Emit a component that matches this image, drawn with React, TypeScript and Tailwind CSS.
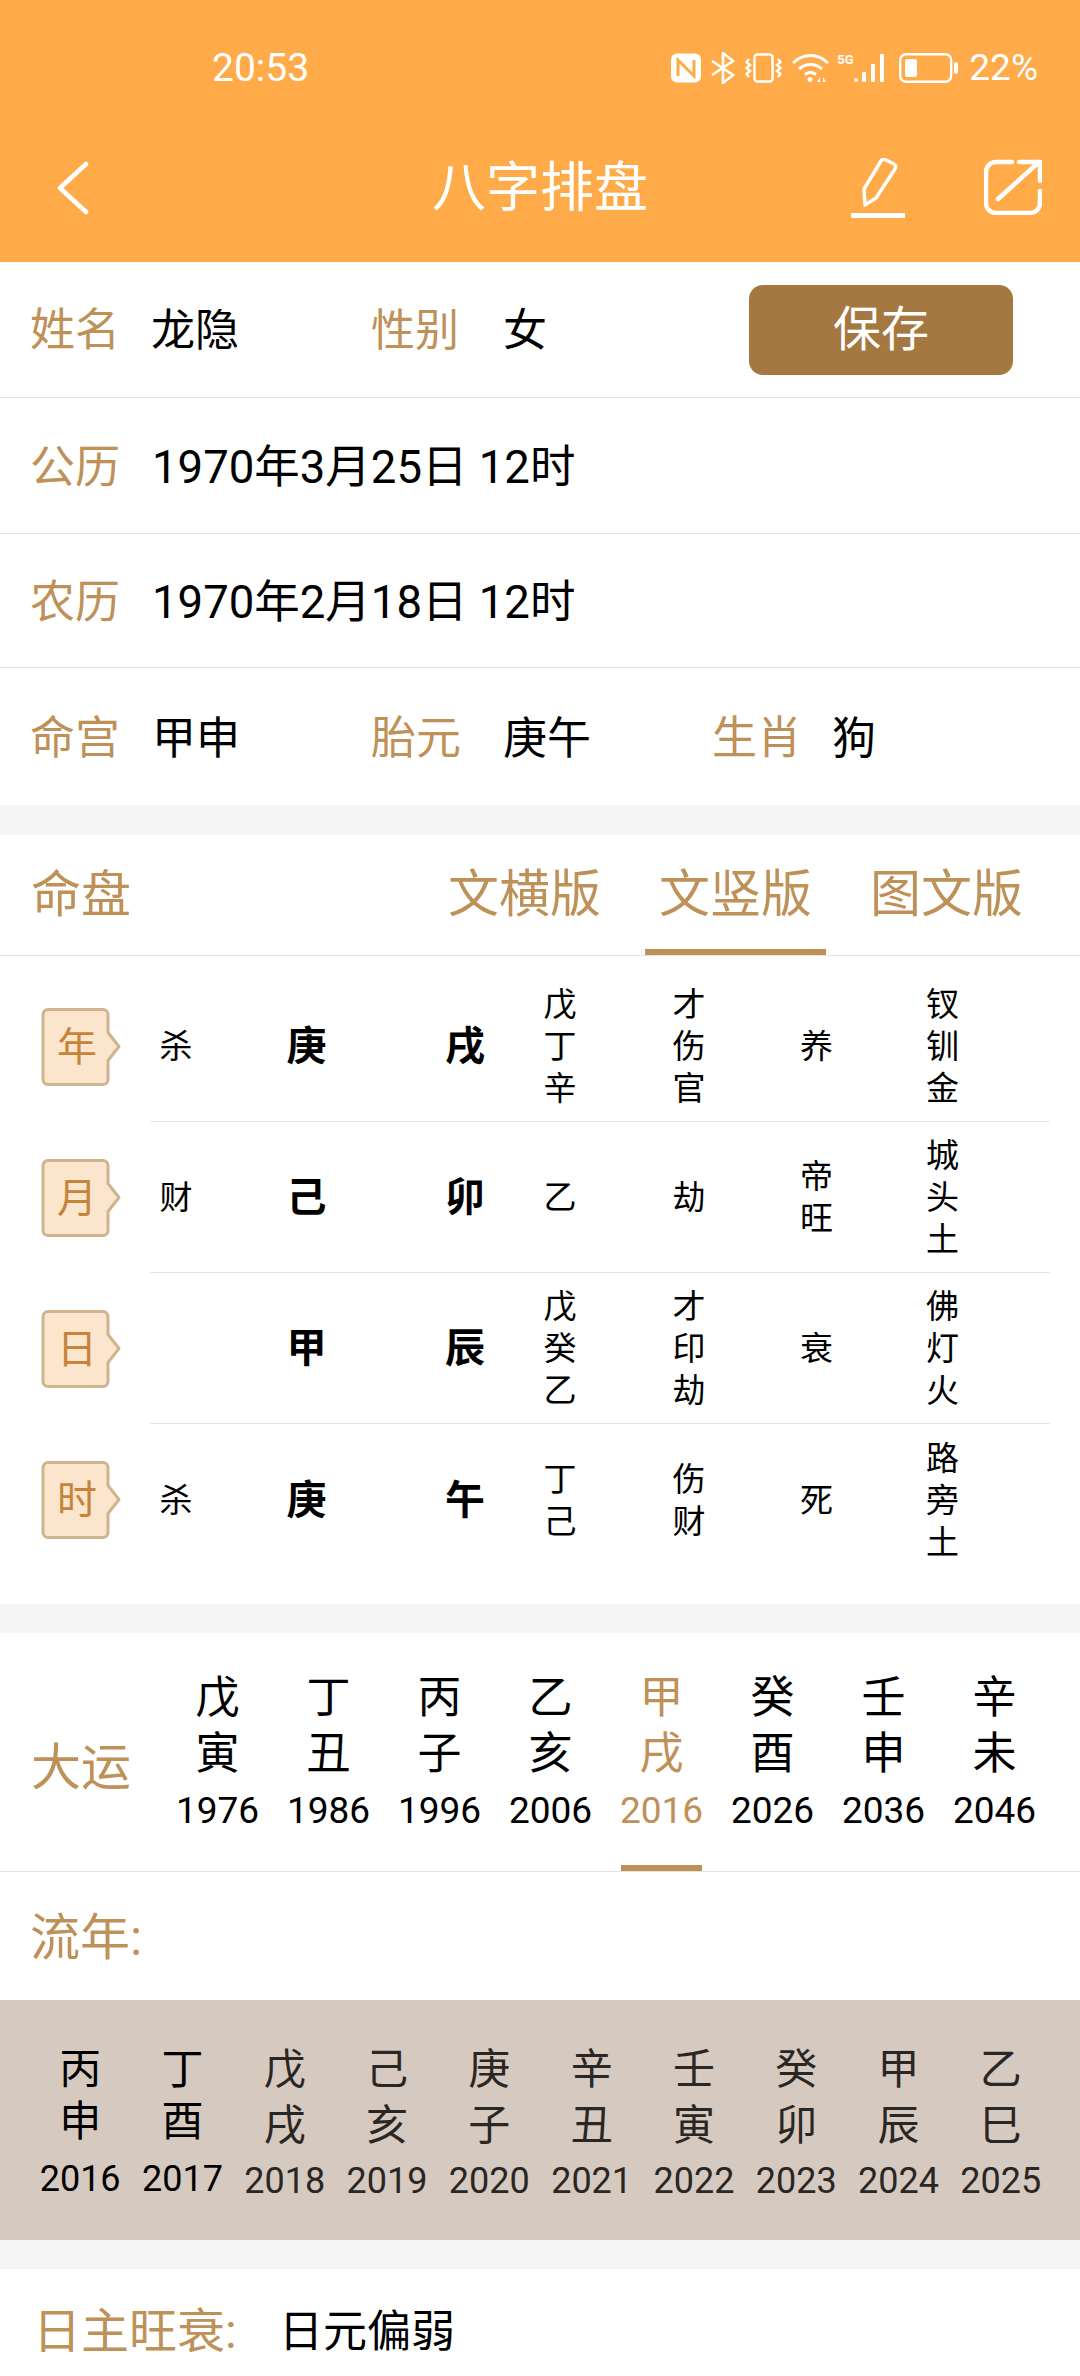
import React from 'react';

const FONT = "[font-family:Roboto,'Noto_Sans_CJK_SC',sans-serif]";

const tableRows = [
  { label: '年', ten: '杀', stem: '庚', branch: '戌', hidden: ['戊', '丁', '辛'], gods: ['才', '伤', '官'], stage: ['养'], nayin: ['钗', '钏', '金'] },
  { label: '月', ten: '财', stem: '己', branch: '卯', hidden: ['乙'], gods: ['劫'], stage: ['帝', '旺'], nayin: ['城', '头', '土'] },
  { label: '日', ten: '', stem: '甲', branch: '辰', hidden: ['戊', '癸', '乙'], gods: ['才', '印', '劫'], stage: ['衰'], nayin: ['佛', '灯', '火'] },
  { label: '时', ten: '杀', stem: '庚', branch: '午', hidden: ['丁', '己'], gods: ['伤', '财'], stage: ['死'], nayin: ['路', '旁', '土'] },
];

const dayun = [
  ['戊', '寅', '1976'],
  ['丁', '丑', '1986'],
  ['丙', '子', '1996'],
  ['乙', '亥', '2006'],
  ['甲', '戌', '2016'],
  ['癸', '酉', '2026'],
  ['壬', '申', '2036'],
  ['辛', '未', '2046'],
];

const liunian = [
  ['丙', '申', '2016'],
  ['丁', '酉', '2017'],
  ['戊', '戌', '2018'],
  ['己', '亥', '2019'],
  ['庚', '子', '2020'],
  ['辛', '丑', '2021'],
  ['壬', '寅', '2022'],
  ['癸', '卯', '2023'],
  ['甲', '辰', '2024'],
  ['乙', '巳', '2025'],
];

const StatusIcons: React.FC = () => (
  <div className="flex items-center">
    <svg width="30" height="30" viewBox="0 0 30 30" className="mr-[10px]">
      <rect x="0" y="0.5" width="30" height="29" rx="6" fill="#fff" />
      <path d="M7 23V7l16 16V7" fill="none" stroke="#FFAB49" strokeWidth="3" />
    </svg>
    <svg width="24" height="32" viewBox="0 0 24 32" fill="none" stroke="#fff" strokeWidth="2.6" className="mr-[10px]">
      <path d="M1 9l21 14-10 8V1l10 8L1 23" />
    </svg>
    <svg width="37" height="30" viewBox="0 0 37 30" fill="none" stroke="#fff" strokeWidth="2.4" className="mr-[10px]">
      <rect x="9.5" y="1.5" width="18" height="27" rx="3" />
      <path d="M4 6l-2.5 3L5 12l-3.5 3L5 18l-3.5 3L4 24" />
      <path d="M33 6l2.5 3L32 12l3.5 3L32 18l3.5 3L33 24" />
    </svg>
    <svg width="37" height="30" viewBox="0 0 37 30" fill="none" stroke="#fff" strokeWidth="3" className="mr-[8px]">
      <path d="M1 10c10-10 25-10 35 0" />
      <path d="M7 16c7-6 16-6 23 0" />
      <path d="M13 21.500c3.500-2.500 7.500-2.500 11 0" />
      <circle cx="18" cy="26.500" r="2.500" fill="#fff" stroke="none" />
      <path d="M25 29l3-5v5zM31 24l3 5h-3z" fill="#fff" stroke="none" />
    </svg>
    <div className="relative w-[50px] h-[30px] mr-[12px]">
      <span className={`absolute left-0 top-[1px] text-white text-[13px] leading-[12px] font-bold ${FONT}`}>5G</span>
      <svg width="33" height="30" viewBox="0 0 33 30" fill="#fff" className="absolute right-0 top-0">
        <rect x="0" y="25" width="4" height="4" rx="2" />
        <rect x="8" y="19" width="4" height="10" rx="1" />
        <rect x="17" y="11" width="4" height="18" rx="1" />
        <rect x="26" y="1" width="4" height="28" rx="1" />
      </svg>
    </div>
    <svg width="60" height="30" viewBox="0 0 60 30" fill="none" className="mr-[10px]">
      <rect x="1.200" y="1.200" width="51" height="27.600" rx="6" stroke="#fff" strokeWidth="2.400" />
      <rect x="6" y="6" width="12" height="18" rx="2" fill="#fff" />
      <rect x="55" y="9" width="4" height="12" rx="2" fill="#fff" />
    </svg>
    <span className={`text-white text-[37px] leading-[40px] ${FONT}`}>22%</span>
  </div>
);

const Header: React.FC = () => (
  <div className="h-[262px] bg-[#FFAB49] pt-[48px]">
    <div className="h-[40px] flex items-center justify-between pl-[212px] pr-[42px]">
      <span className={`text-white text-[39px] leading-[40px] ${FONT}`}>20:53</span>
      <StatusIcons />
    </div>
    <div className="mt-[69px] h-[60px] grid grid-cols-[1fr_auto_1fr] items-center px-[38px]">
      <svg width="32" height="54" viewBox="0 0 32 54" fill="none" stroke="#fff" strokeWidth="4.500" strokeLinecap="round" strokeLinejoin="round" className="ml-[19px]">
        <path d="M29 3L3 27l26 24" />
      </svg>
      <span className="text-white text-[54px] leading-[60px] pt-[2px]">八字排盘</span>
      <div className="flex justify-end items-start gap-[79px]">
        <svg width="54" height="60" viewBox="0 0 54 60" fill="none" stroke="#fff" strokeWidth="3.500" strokeLinejoin="round">
          <path d="M14 47L13 31 30 3c1-2 3-2 5-1l8 4c2 1 2 3 1 5L25 40z" />
          <path d="M0 57.500h54" strokeWidth="5" />
        </svg>
        <svg width="58" height="56" viewBox="0 0 58 56" fill="none" stroke="#fff" strokeWidth="4.500" strokeLinecap="round" strokeLinejoin="round" className="mt-[1px]">
          <path d="M28 3H12a10 10 0 0 0-10 10v31a10 10 0 0 0 10 10h34a10 10 0 0 0 10-10V32" />
          <path d="M14 40L55 3M35 3h21v19" />
        </svg>
      </div>
    </div>
  </div>
);

const Label: React.FC<{ children: React.ReactNode; className?: string }> = ({ children, className = 'text-[45px]' }) => (
  <span className={`text-[#BE9159] leading-[56px] ${className}`}>{children}</span>
);

const Value: React.FC<{ children: React.ReactNode; className?: string }> = ({ children, className = 'text-[44px]' }) => (
  <span className={`text-black leading-[56px] ${className}`}>{children}</span>
);

const InfoSection: React.FC = () => (
  <div>
    <div className="h-[136px] border-b border-[#E5E5E5] pl-[30px] grid grid-cols-[121px_220px_132px_246px_auto] items-center">
      <span className="pt-[3px]"><Label>姓名</Label></span>
      <span className="pt-[3px]"><Value>龙隐</Value></span>
      <span className="pt-[3px]"><Label className="text-[44px]">性别</Label></span>
      <span className="pt-[3px]"><Value>女</Value></span>
      <button className="w-[264px] h-[90px] rounded-[14px] bg-[#A67841] text-white text-[48px] leading-[56px]">保存</button>
    </div>
    <div className="h-[136px] pt-[4px] border-b border-[#E5E5E5] pl-[30px] grid grid-cols-[122px_auto] items-center justify-start">
      <Label>公历</Label>
      <Value className="text-[45.500px]">1970年3月25日 12时</Value>
    </div>
    <div className="h-[134px] pt-[4px] border-b border-[#E5E5E5] pl-[30px] grid grid-cols-[122px_auto] items-center justify-start">
      <Label>农历</Label>
      <Value className="text-[45.500px]">1970年2月18日 12时</Value>
    </div>
    <div className="h-[137px] pt-[5px] pl-[30px] grid grid-cols-[122px_219px_132px_209px_120px_auto] items-center justify-start">
      <Label>命宫</Label>
      <Value>甲申</Value>
      <Label>胎元</Label>
      <Value>庚午</Value>
      <Label>生肖</Label>
      <Value>狗</Value>
    </div>
  </div>
);

const PillarBadge: React.FC<{ text: string }> = ({ text }) => (
  <div className="relative w-[80px] h-[78px] flex items-center justify-center">
    <svg width="80" height="78" viewBox="0 0 80 78" className="absolute inset-0">
      <path
        d="M7 1.500h55a5 5 0 0 1 5 5v18l11 14-11 14v19a5 5 0 0 1-5 5H7a5 5 0 0 1-5-5V6.500a5 5 0 0 1 5-5z"
        fill="#FBE5CC"
        stroke="#CFB48F"
        strokeWidth="3"
        strokeLinejoin="round"
      />
    </svg>
    <span className="relative pr-[8px] pt-[2px] text-[#C6843A] text-[40px] leading-[44px]">{text}</span>
  </div>
);

const Stack: React.FC<{ items: string[] }> = ({ items }) => (
  <div className="flex flex-col items-center text-black text-[33px] leading-[42px]">
    {items.map((c, i) => (
      <span key={i}>{c}</span>
    ))}
  </div>
);

const MingPan: React.FC = () => (
  <div>
    <div className="h-[121px] border-b border-[#E5E5E5] flex items-center justify-between pl-[31px] pr-[57px]">
      <Label className="text-[50px]">命盘</Label>
      <div className="flex gap-[58px] text-[#BE9159] text-[51px] leading-[56px]">
        <span>文横版</span>
        <span className="relative">
          文竖版
          <span className="absolute -left-[14px] -right-[14px] top-[82px] h-[6px] bg-[#BE9159]" />
        </span>
        <span>图文版</span>
      </div>
    </div>
    <div className="pt-[15px] pb-[29px]">
      {tableRows.map((r, i) => (
        <div key={r.label} className="flex items-center pl-[41px] pr-[30px]">
          <div className="w-[109px]">
            <PillarBadge text={r.label} />
          </div>
          <div className={`flex-1 h-[151px] pt-[2px] grid grid-cols-[52px_209px_108px_82px_176px_79px_173px] items-center justify-items-center ${i < 3 ? 'border-b border-[#E5E5E5]' : ''}`}>
            <span className="text-black text-[33px] leading-[42px]">{r.ten}</span>
            <span className="text-black text-[40px] leading-[44px] font-bold">{r.stem}</span>
            <span className="text-black text-[40px] leading-[44px] font-bold">{r.branch}</span>
            <Stack items={r.hidden} />
            <Stack items={r.gods} />
            <Stack items={r.stage} />
            <Stack items={r.nayin} />
          </div>
        </div>
      ))}
    </div>
  </div>
);

const DaYun: React.FC = () => (
  <div>
    <div className="h-[239px] border-b border-[#E5E5E5] flex pl-[31px]">
      <div className="w-[131px] self-center pt-[32px]">
        <Label className="text-[50px]">大运</Label>
      </div>
      <div className="flex pt-[37px]">
        {dayun.map((d, i) => {
          const active = i === 4;
          return (
            <div key={d[2]} className={`relative w-[111px] flex flex-col items-center ${active ? 'text-[#BE9159]' : 'text-black'}`}>
              <span className="text-[44px] leading-[56px]">{d[0]}</span>
              <span className="text-[44px] leading-[56px]">{d[1]}</span>
              <span className={`text-[37px] leading-[44px] mt-[7px] ${FONT}`}>{d[2]}</span>
              {active && <span className="absolute left-[15px] right-[15px] top-[195px] h-[6px] bg-[#BE9159]" />}
            </div>
          );
        })}
      </div>
    </div>
    <div className="h-[128px] pt-[3px] flex items-center pl-[30px]">
      <Label className="text-[50px]">流年:</Label>
    </div>
  </div>
);

const LiuNian: React.FC = () => (
  <div className="h-[240px] bg-[#D6CAC0] flex pl-[29px] pt-[42px]">
    {liunian.map((d, i) => {
      const first = i < 2;
      return (
        <div key={d[2]} className={`w-[102.300px] flex flex-col items-center ${first ? 'text-black pt-[2px]' : 'text-[#2A2624]'}`}>
          <span className={`text-[42px] ${first ? 'leading-[52px]' : 'leading-[56px]'}`}>{d[0]}</span>
          <span className={`text-[42px] ${first ? 'leading-[52px]' : 'leading-[56px]'}`}>{d[1]}</span>
          <span className={`text-[36px] leading-[44px] ${first ? 'mt-[9px]' : 'mt-[5px]'} ${FONT}`}>{d[2]}</span>
        </div>
      );
    })}
  </div>
);

const Gap: React.FC<{ h: string }> = ({ h }) => <div className={`${h} bg-[#F5F5F5]`} />;

export default function App() {
  return (
    <div className={`w-[1080px] h-[2376px] overflow-hidden bg-white ${FONT}`}>
      <Header />
      <InfoSection />
      <Gap h="h-[30px]" />
      <MingPan />
      <Gap h="h-[29px]" />
      <DaYun />
      <LiuNian />
      <Gap h="h-[29px]" />
      <div className="pl-[33px] pt-[35px] flex items-center">
        <Label className="text-[48px] w-[246px]">日主旺衰:</Label>
        <Value>日元偏弱</Value>
      </div>
    </div>
  );
}
